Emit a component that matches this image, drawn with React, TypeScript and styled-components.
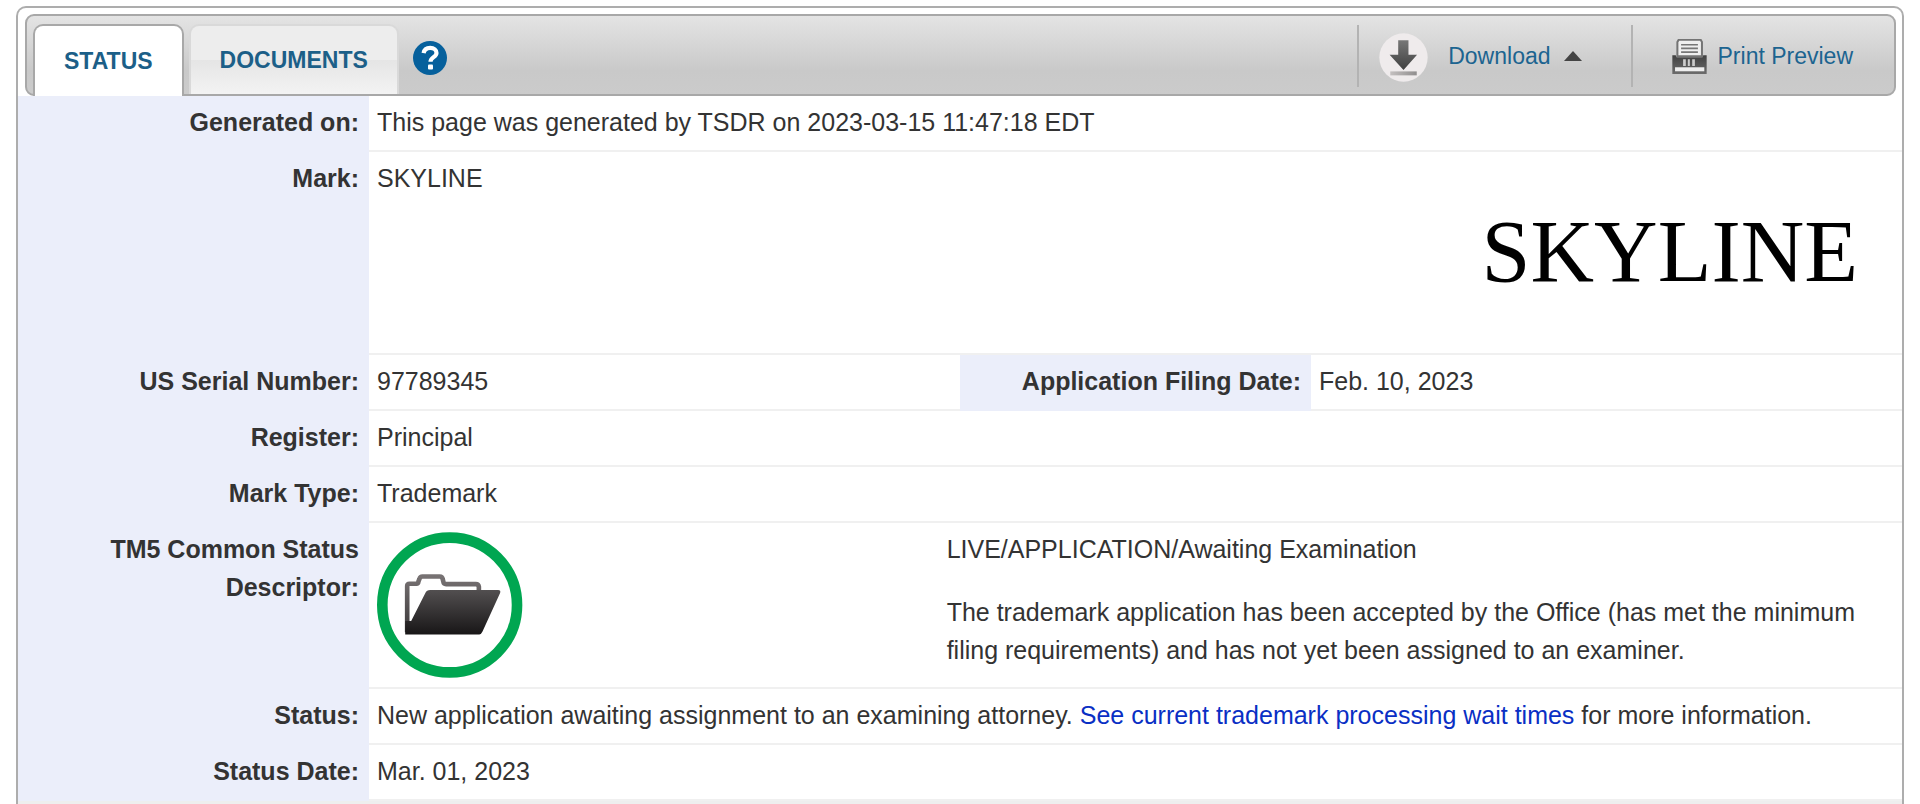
import React from "react";
import styled, { createGlobalStyle, css } from "styled-components";

const GlobalStyle = createGlobalStyle`
  * { box-sizing: border-box; }
  body {
    margin: 0;
    background: #fff;
    color: #333;
    font-family: "Liberation Sans", Arial, sans-serif;
    font-size: 25px;
    line-height: 38px;
  }
`;

const Page = styled.main`
  padding: 6px 16px 0;
`;

const Frame = styled.section`
  border: 2px solid #adadad;
  border-bottom: 0;
  border-radius: 10px 10px 0 0;
`;

const Toolbar = styled.header`
  display: flex;
  justify-content: space-between;
  margin: 6px 6px 0 7px;
  height: 82px;
  border: 2px solid #a8a8a8;
  border-radius: 9px;
  background: linear-gradient(#e4e4e4, #c9c9c9 70%, #cbcbcb);
`;

const Tabs = styled.nav`
  display: flex;
  align-items: stretch;
  gap: 5px;
  padding: 8px 0 0 6px;
`;

const Tab = styled.button<{ $active?: boolean }>`
  padding: 0 29px;
  border: 2px solid #d9d9d9;
  border-bottom: 0;
  border-radius: 10px 10px 0 0;
  background: linear-gradient(#ededed 50%, #e5e5e5 50%, #f3f3f3);
  color: #1c5f88;
  font: bold 23px "Liberation Sans", Arial, sans-serif;
  cursor: pointer;
  ${(p) =>
    p.$active &&
    css`
      margin-bottom: -2px;
      border-color: #a8a8a8;
      background: #fff;
    `}
`;

const HelpButton = styled.button`
  display: flex;
  align-self: center;
  margin: 0 0 2px 9px;
  padding: 0;
  border: 0;
  background: none;
  cursor: pointer;
`;

const Actions = styled.div`
  display: flex;
  padding: 9px 0 7px;
`;

const Action = styled.button<{ $gap: number; $left: number; $right: number }>`
  display: flex;
  align-items: center;
  gap: ${(p) => p.$gap}px;
  padding: 0 ${(p) => p.$right}px 0 ${(p) => p.$left}px;
  border: 0;
  border-left: 2px solid #b3b3b3;
  background: none;
  color: #1c6490;
  font: 23px "Liberation Sans", Arial, sans-serif;
  cursor: pointer;
`;

const ActionText = styled.span`
  display: flex;
  align-items: center;
  gap: 13px;
`;

const Details = styled.table`
  width: 100%;
  border-collapse: separate;
  border-spacing: 0;
  table-layout: fixed;
`;

const LabelCol = styled.col`
  width: 351px;
`;

const Label = styled.th`
  padding: 7px 10px 11px 60px;
  background: #ebeefa;
  text-align: right;
  vertical-align: top;
`;

const Value = styled.td`
  padding: 7px 6px 9px 8px;
  border-bottom: 2px solid #f0f0f0;
  vertical-align: top;
`;

const MarkRow = styled.div`
  display: flex;
  justify-content: space-between;
  height: 185px;
  padding-right: 38px;
`;

const MarkDrawing = styled.span`
  align-self: center;
  color: #000;
  font: 88px/1 "Liberation Serif", "Times New Roman", serif;
`;

const Descriptor = styled.div`
  display: grid;
  grid-template-columns: 3fr 5fr;

  svg {
    display: block;
    margin-top: 2px;
  }

  p {
    margin: 0 0 25px;
  }

  p:last-child {
    margin: 0;
  }
`;

const Link = styled.a`
  color: #0a2fc4;
  text-decoration: none;
`;

const NextPanel = styled.div`
  height: 3px;
  background: #eeeeee;
`;

const HelpIcon = () => (
  <svg width="34" height="34" viewBox="0 0 34 34" aria-hidden="true">
    <circle cx="17" cy="17" r="17" fill="#06609c" />
    <path
      d="M10.600 12.200C11.200 8.400 13.700 6.900 17.200 6.900c3.800 0 6.300 2.100 6.300 5 0 4.300-6 4.300-6 8.900"
      fill="none"
      stroke="#fff"
      strokeWidth="4.200"
    />
    <rect x="15" y="23.600" width="5" height="4.800" rx="1" fill="#fff" />
  </svg>
);

const DownloadIcon = () => (
  <svg width="49" height="52" viewBox="30 33 148 157" aria-hidden="true">
    <defs>
      <linearGradient id="arrow" x1="0" y1="0" x2="0" y2="1">
        <stop offset="0" stopColor="#777" />
        <stop offset="1" stopColor="#3f3f3f" />
      </linearGradient>
      <linearGradient id="tray" x1="0" y1="0" x2="1" y2="0">
        <stop offset="0" stopColor="#c4c0c0" />
        <stop offset="1" stopColor="#908e8e" />
      </linearGradient>
    </defs>
    <circle cx="104" cy="116" r="73" fill="#efebec" />
    <path d="M88 64h31v44h26l-41 46-42-46h26z" fill="url(#arrow)" />
    <path d="M64 158h80v12H64z" fill="url(#tray)" />
  </svg>
);

const CaretUp = () => (
  <svg width="18" height="10" viewBox="0 0 18 10" aria-hidden="true">
    <path d="M9 0l9 10H0z" fill="#444" />
  </svg>
);

const PrinterIcon = () => (
  <svg width="35" height="35" viewBox="97 50 104 104" aria-hidden="true">
    <defs>
      <linearGradient id="printer" x1="0" y1="0" x2="0" y2="1">
        <stop offset="0" stopColor="#404040" />
        <stop offset="1" stopColor="#6c6c6c" />
      </linearGradient>
    </defs>
    <path d="M98 98h10l3 6h76l3-6h10v56H98z" fill="url(#printer)" />
    <path d="M117 52h65l4 7v42h-73V59z" fill="#efefef" stroke="#747474" strokeWidth="6" />
    <path d="M124 67h50M124 78h50M124 89h50" stroke="#777" strokeWidth="5" />
    <path d="M130 110h8v20h-8zM144 110h6v20h-6zM157 110h8v20h-8z" fill="#ccc" />
    <path d="M106 134h87v12h-87z" fill="#eee" />
  </svg>
);

const FolderIcon = () => (
  <svg width="146" height="146" viewBox="51 36 440 440" role="img" aria-label="Live application">
    <defs>
      <linearGradient id="folder" x1="0" y1="0" x2="0" y2="1">
        <stop offset="0" stopColor="#524f50" />
        <stop offset="1" stopColor="#181617" />
      </linearGradient>
      <linearGradient id="folderBack" x1="0" y1="0" x2="0" y2="1">
        <stop offset="0" stopColor="#777273" />
        <stop offset="1" stopColor="#3a3738" />
      </linearGradient>
    </defs>
    <circle cx="270" cy="256" r="203" fill="#fff" stroke="#00a651" strokeWidth="32" />
    <path
      d="M142 338V199q0-7 7-7h21q5 0 6-7l3-8q2-7 9-7h52q8 0 9 8l2 8q1 7 8 7h90q8 0 9 8v14"
      fill="none"
      stroke="url(#folderBack)"
      strokeWidth="14"
    />
    <path
      d="M136 345V304h18l42-83q5-10 15-10h205q9 0 6 9l-53 116q-4 9-10 9z"
      fill="url(#folder)"
    />
  </svg>
);

type RowProps = { label: string; children: React.ReactNode };

const Row = ({ label, children }: RowProps) => (
  <tr>
    <Label scope="row">{label}</Label>
    <Value colSpan={3}>{children}</Value>
  </tr>
);

export default function App() {
  return (
    <Page>
      <GlobalStyle />
      <Frame>
        <Toolbar>
          <Tabs>
            <Tab type="button" $active>STATUS</Tab>
            <Tab type="button">DOCUMENTS</Tab>
            <HelpButton type="button" aria-label="Help">
              <HelpIcon />
            </HelpButton>
          </Tabs>
          <Actions>
            <Action type="button" $gap={20} $left={20} $right={49}>
              <DownloadIcon />
              <ActionText>
                Download
                <CaretUp />
              </ActionText>
            </Action>
            <Action type="button" $gap={11} $left={39} $right={41}>
              <PrinterIcon />
              Print Preview
            </Action>
          </Actions>
        </Toolbar>
        <Details>
          <colgroup>
            <LabelCol />
            <col />
            <LabelCol />
            <col />
          </colgroup>
          <tbody>
            <Row label="Generated on:">This page was generated by TSDR on 2023-03-15 11:47:18 EDT</Row>
            <Row label="Mark:">
              <MarkRow>
                <span>SKYLINE</span>
                <MarkDrawing>SKYLINE</MarkDrawing>
              </MarkRow>
            </Row>
            <tr>
              <Label scope="row">US Serial Number:</Label>
              <Value>97789345</Value>
              <Label>Application Filing Date:</Label>
              <Value>Feb. 10, 2023</Value>
            </tr>
            <Row label="Register:">Principal</Row>
            <Row label="Mark Type:">Trademark</Row>
            <Row label="TM5 Common Status Descriptor:">
              <Descriptor>
                <FolderIcon />
                <div>
                  <p>LIVE/APPLICATION/Awaiting Examination</p>
                  <p>
                    The trademark application has been accepted by the Office (has met the minimum
                    filing requirements) and has not yet been assigned to an examiner.
                  </p>
                </div>
              </Descriptor>
            </Row>
            <Row label="Status:">
              New application awaiting assignment to an examining attorney.{" "}
              <Link href="#wait-times">See current trademark processing wait times</Link> for more
              information.
            </Row>
            <Row label="Status Date:">Mar. 01, 2023</Row>
          </tbody>
        </Details>
        <NextPanel />
      </Frame>
    </Page>
  );
}
